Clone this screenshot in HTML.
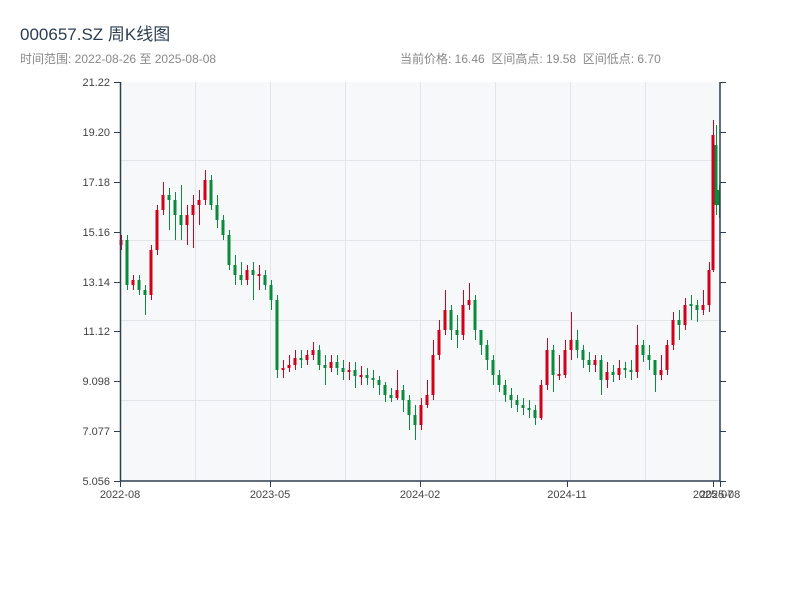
<!DOCTYPE html>
<html><head><meta charset="utf-8"><style>
body{margin:0;width:800px;height:600px;background:#fff;overflow:hidden}
</style></head><body>
<svg width="800" height="600" xmlns="http://www.w3.org/2000/svg" font-family="Liberation Sans, Noto Sans CJK SC, sans-serif">
<text x="20" y="40" font-size="17" fill="#2c3e50">000657.SZ 周K线图</text>
<text x="20" y="63" font-size="12" fill="#888">时间范围: 2022-08-26 至 2025-08-08</text>
<text x="400" y="63" font-size="12" fill="#888" xml:space="preserve">当前价格: 16.46  区间高点: 19.58  区间低点: 6.70</text>
<rect x="120" y="82" width="600" height="399" fill="#f7f8fa"/>
<g stroke="#e3e5ea" stroke-width="1">
<line x1="195.5" y1="82" x2="195.5" y2="481"/><line x1="270.5" y1="82" x2="270.5" y2="481"/><line x1="345.5" y1="82" x2="345.5" y2="481"/><line x1="420.5" y1="82" x2="420.5" y2="481"/><line x1="495.5" y1="82" x2="495.5" y2="481"/><line x1="570.5" y1="82" x2="570.5" y2="481"/><line x1="645.5" y1="82" x2="645.5" y2="481"/>
<line x1="120" y1="160.5" x2="720" y2="160.5"/><line x1="120" y1="240.5" x2="720" y2="240.5"/><line x1="120" y1="320.5" x2="720" y2="320.5"/><line x1="120" y1="400.5" x2="720" y2="400.5"/>
</g>
<g transform="translate(0.5,0)">
<path stroke="#d0021b" stroke-width="1" fill="none" d="M121 235V250M133 275V290M151 245V300M157 205V255M163 182V215M187 205V245M193 195V248M199 190V225M205 170V205M247 265V285M259 265V290M283 360V378M289 355V372M295 350V370M307 350V365M313 342V360M331 355V372M349 362V380M361 366V385M397 370V400M421 398V430M427 380V408M433 340V400M439 320V360M445 290V335M463 290V340M469 283V310M541 380V420M547 338V390M559 355V380M565 340V378M571 312V360M595 355V372M607 362V388M619 360V380M637 325V378M661 355V380M667 340V375M673 312V350M685 298V330M703 290V315M709 262V312M713 120V272"/>
<path stroke="#0a8a3a" stroke-width="1" fill="none" d="M127 235V290M139 275V295M145 285V315M169 188V230M175 192V240M181 185V240M211 175V210M217 195V228M223 215V240M229 230V270M235 255V285M241 262V285M253 262V300M265 270V290M271 280V310M277 295V378M301 350V368M319 345V370M325 355V385M337 355V375M343 360V380M355 362V388M367 368V385M373 370V388M379 376V395M385 382V402M391 388V402M403 385V412M409 395V430M415 405V440M451 305V340M457 315V348M475 295V340M481 335V355M487 340V370M493 355V385M499 370V392M505 380V402M511 388V408M517 395V412M523 398V415M529 400V418M535 405V425M553 345V392M577 330V358M583 345V368M589 352V372M601 355V395M613 365V382M625 362V378M631 360V380M643 340V362M649 345V370M655 365V392M679 310V340M691 295V320M697 300V322M716 125V215M719 185V218"/>
</g>
<path stroke="#d0021b" stroke-width="3" fill="none" d="M121 240V245M133 280V285M151 250V295M157 210V250M163 195V210M187 215V225M193 205V215M199 200V205M205 180V200M247 270V280M259 274V276M283 368V370M289 365V368M295 358V365M307 355V360M313 350V355M331 362V368M349 370V372M361 375V377M397 390V398M421 405V425M427 395V405M433 355V395M439 330V355M445 310V330M463 305V335M469 300V305M541 385V418M547 350V385M559 374V376M565 350V375M571 340V350M595 360V365M607 372V380M619 368V375M637 345V372M661 370V375M667 345V370M673 320V345M685 305V325M703 305V310M709 270V305M713 135V270"/>
<path stroke="#0a8a3a" stroke-width="3" fill="none" d="M127 240V285M139 280V290M145 290V295M169 195V200M175 200V215M181 215V225M211 180V205M217 205V220M223 220V235M229 235V265M235 265V275M241 275V280M253 270V275M265 275V285M271 285V300M277 300V370M301 358V360M319 350V365M325 365V368M337 362V368M343 368V372M355 370V376M367 375V378M373 378V380M379 380V385M385 385V395M391 395V398M403 390V400M409 400V415M415 415V425M451 310V330M457 330V335M475 300V330M481 330V345M487 345V360M493 360V375M499 375V385M505 385V395M511 395V400M517 400V405M523 405V408M529 408V410M535 410V418M553 350V375M577 340V350M583 350V360M589 360V365M601 360V380M613 372V375M625 368V370M631 370V372M643 345V355M649 355V360M655 360V375M679 320V325M691 304V306M697 305V310M716 145V205M719 190V205"/>
<g stroke="#2c3e50" stroke-width="1.5" fill="none">
<line x1="120.5" y1="82" x2="120.5" y2="482"/><line x1="120" y1="481" x2="720" y2="481"/><line x1="720" y1="82" x2="720" y2="481"/>
</g>
<g stroke="#2c3e50" stroke-width="1">
<path d="M114 82.5H120M114 132.5H120M114 182.5H120M114 232.5H120M114 282.5H120M114 331.5H120M114 381.5H120M114 431.5H120M114 481.5H120"/>
<path d="M720 82.5H726M720 132.5H726M720 182.5H726M720 232.5H726M720 282.5H726M720 331.5H726M720 381.5H726M720 431.5H726M720 481.5H726"/>
<path d="M120.5 481V487M270.5 481V487M420.5 481V487M567.5 481V487M713.5 481V487M720.5 481V487"/>
</g>
<g font-size="11" fill="#444" text-anchor="end">
<text x="110" y="86">21.22</text><text x="110" y="136">19.20</text><text x="110" y="186">17.18</text><text x="110" y="236">15.16</text><text x="110" y="286">13.14</text><text x="110" y="335">11.12</text><text x="110" y="385">9.098</text><text x="110" y="435">7.077</text><text x="110" y="485">5.056</text>
</g>
<g font-size="11" fill="#444" text-anchor="middle">
<text x="120" y="498">2022-08</text><text x="270" y="498">2023-05</text><text x="420" y="498">2024-02</text><text x="567" y="498">2024-11</text><text x="713" y="498">2025-07</text><text x="720" y="498">2025-08</text>
</g>
</svg>
</body></html>
